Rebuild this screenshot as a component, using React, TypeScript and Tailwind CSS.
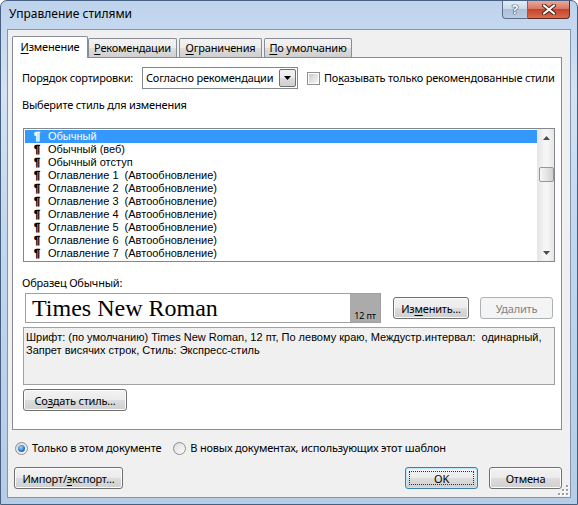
import React from 'react';

const styleNames = [
  'Обычный',
  'Обычный (веб)',
  'Обычный отступ',
  'Оглавление 1  (Автообновление)',
  'Оглавление 2  (Автообновление)',
  'Оглавление 3  (Автообновление)',
  'Оглавление 4  (Автообновление)',
  'Оглавление 5  (Автообновление)',
  'Оглавление 6  (Автообновление)',
  'Оглавление 7  (Автообновление)',
];

const U: React.FC<{ children: React.ReactNode }> = ({ children }) => (
  <span className="underline underline-offset-[2px]">{children}</span>
);

const Button: React.FC<{
  className?: string;
  disabled?: boolean;
  isDefault?: boolean;
  children: React.ReactNode;
}> = ({ className = '', disabled, isDefault, children }) => {
  const look = disabled
    ? 'border-[#adb2b5] bg-[#f4f4f4] text-[#838383]'
    : isDefault
      ? 'border-[#3c7fb1] bg-[linear-gradient(#f2f2f2_0%,#ebebeb_50%,#dddddd_50%,#cfcfcf_100%)] shadow-[inset_0_0_0_1px_#bfe6fb] text-black'
      : 'border-[#707070] bg-[linear-gradient(#f2f2f2_0%,#ebebeb_50%,#dddddd_50%,#cfcfcf_100%)] shadow-[inset_0_0_0_1px_#fcfcfc] text-black';
  return (
    <div
      className={`relative flex h-[22px] items-center justify-center whitespace-nowrap rounded-[3px] border text-[11px] leading-none ${look} ${className}`}
    >
      {isDefault && <span className="absolute inset-[3px] border border-dotted border-[#333]" />}
      {children}
    </div>
  );
};

const Radio: React.FC<{ checked?: boolean }> = ({ checked }) => (
  <div className="flex h-[13px] w-[13px] items-center justify-center rounded-full border border-[#8f8f8f] bg-[linear-gradient(135deg,#d6d6d6,#fbfbfb)]">
    {checked ? (
      <div className="h-[7px] w-[7px] rounded-full bg-[radial-gradient(circle_at_40%_35%,#9fd5ff_0%,#2d7ad6_55%,#0c3e8a_100%)]" />
    ) : (
      <div className="h-[9px] w-[9px] rounded-full bg-[linear-gradient(135deg,#e2e2e2,#f8f8f8)]" />
    )}
  </div>
);

const Tab: React.FC<{ active?: boolean; className?: string; children: React.ReactNode }> = ({
  active,
  className = '',
  children,
}) =>
  active ? (
    <div
      className={`relative z-10 -mb-px flex h-[22px] items-center justify-center rounded-t-[2px] border border-b-0 border-[#898c95] bg-white pb-[1px] ${className}`}
    >
      {children}
    </div>
  ) : (
    <div
      className={`flex h-[19px] items-center justify-center rounded-t-[2px] border border-b-0 border-[#898c95] bg-[linear-gradient(#f3f3f3,#ebebeb_50%,#dedede_50%,#cfcfcf)] ${className}`}
    >
      {children}
    </div>
  );

export default function App() {
  return (
    <div className="relative flex h-[505px] w-[578px] flex-col overflow-hidden rounded-t-[7px] border border-[#475f80] bg-[linear-gradient(180deg,#bed3ec_0%,#d3e3f4_18%,#c3d7ee_45%,#b6cce7_100%)] font-['Noto_Sans',sans-serif] text-[11px] tracking-[-0.2px] text-black">
      {/* title bar */}
      <div className="flex h-[28px] shrink-0 items-start">
        <div className="pl-[8px] pt-[5px] text-[12px] leading-[16px] tracking-normal">Управление стилями</div>
        <div className="ml-auto mr-[7px] flex">
          <div className="flex h-[18px] w-[26px] items-center justify-center rounded-bl-[4px] border border-t-0 border-[#5b6f8c] bg-[linear-gradient(#e3ecf6,#c8d7e9_50%,#aebfd6_50%,#bccde2)]">
            <span className="text-[13px] font-bold leading-none text-white [text-shadow:0_0_1px_#27364c,0_0_1px_#27364c,0_0_1px_#27364c]">
              ?
            </span>
          </div>
          <div className="flex h-[18px] w-[42px] items-center justify-center rounded-br-[4px] border border-l-0 border-t-0 border-[#5b2b24] bg-[linear-gradient(#e9a99b,#d7725d_50%,#c4432a_50%,#d86d4f)]">
            <svg width="14" height="11" viewBox="0 0 14 11">
              <path d="M2 1.5 L12 9.5 M12 1.5 L2 9.5" stroke="#4a1f18" strokeWidth="4" strokeLinecap="round" />
              <path d="M2 1.5 L12 9.5 M12 1.5 L2 9.5" stroke="#ffffff" strokeWidth="2.2" strokeLinecap="round" />
            </svg>
          </div>
        </div>
      </div>

      {/* client area */}
      <div className="relative mx-[6px] mb-[6px] flex flex-1 flex-col border border-[#8396b0] bg-[#f0f0f0] pb-[8px] pl-[4px] pr-[8px] pt-[6px]">
        {/* tabs */}
        <div className="flex h-[21px] items-end whitespace-nowrap text-[11px]">
          <Tab active className="w-[76px]">
            <span>
              <U>И</U>зменение
            </span>
          </Tab>
          <Tab className="w-[89px]">
            <span>
              <U>Р</U>екомендации
            </span>
          </Tab>
          <Tab className="ml-[2px] w-[83px]">
            <span>
              <U>О</U>граничения
            </span>
          </Tab>
          <Tab className="ml-[2px] w-[88px]">
            <span>
              <U>П</U>о умолчанию
            </span>
          </Tab>
        </div>

        {/* panel */}
        <div className="flex flex-col border border-[#898c95] bg-white pb-[18px] pl-[10px] pr-[6px]">
          <div className="mt-[9px] flex h-[22px] items-center whitespace-nowrap">
            <div className="-ml-px w-[120px]">
              Пор<U>я</U>док сортировки:
            </div>
            <div className="flex h-[22px] w-[156px] items-center border border-[#828790] bg-white">
              <div className="flex-1 pl-[3px]">Согласно рекомендации</div>
              <div className="mr-px flex h-[18px] w-[17px] items-center justify-center rounded-[2px] border border-[#707070] bg-[linear-gradient(#f2f2f2,#ebebeb_50%,#dddddd_50%,#cfcfcf)]">
                <svg width="7" height="4" viewBox="0 0 7 4">
                  <path d="M0 0 H7 L3.5 4 Z" fill="#000" />
                </svg>
              </div>
            </div>
            <div className="ml-[9px] flex h-[13px] w-[13px] items-center justify-center border border-[#8f8f8f] bg-white">
              <div className="h-[9px] w-[9px] bg-[linear-gradient(135deg,#cbcbcb,#f6f6f6)]" />
            </div>
            <div className="ml-[4px]">
              По<U>к</U>азывать только рекомендованные стили
            </div>
          </div>

          <div className="-ml-px mt-[8px] h-[16px] leading-[16px]">Выберите стиль для изменения</div>

          {/* style list */}
          <div className="mt-[15px] flex h-[134px] border border-[#828790] bg-white font-['Liberation_Sans',Arial,sans-serif] tracking-normal">
            <div className="flex-1 pl-px pt-px">
              {styleNames.map((name, i) => (
                <div
                  key={name}
                  className={`flex h-[13px] items-center whitespace-pre pl-[9px] text-[11px] leading-[13px] ${
                    i === 0 ? 'bg-[#3399ff] text-white' : 'text-black'
                  }`}
                >
                  <span className="w-[14px] text-[11px] font-bold [-webkit-text-stroke:0.45px_currentColor]">¶</span>
                  {name}
                </div>
              ))}
            </div>
            <div className="flex w-[17px] flex-col items-center border-l border-[#e8e8e8] bg-[linear-gradient(90deg,#e6e6e6,#f5f5f5_40%,#f5f5f5_60%,#e6e6e6)]">
              <div className="flex h-[17px] w-full items-center justify-center">
                <svg width="7" height="4" viewBox="0 0 7 4">
                  <path d="M0 4 H7 L3.5 0 Z" fill="#4d4d4d" />
                </svg>
              </div>
              <div className="mt-[21px] h-[15px] w-[15px] rounded-[2px] border border-[#979797] bg-[linear-gradient(90deg,#f6f6f6,#e4e4e4_50%,#cfcfcf)]" />
              <div className="mt-auto flex h-[17px] w-full items-center justify-center">
                <svg width="7" height="4" viewBox="0 0 7 4">
                  <path d="M0 0 H7 L3.5 4 Z" fill="#4d4d4d" />
                </svg>
              </div>
            </div>
          </div>

          <div className="-ml-px mt-[13px] h-[16px] leading-[16px]">Образец Обычный:</div>

          <div className="mt-[2px] flex h-[30px] items-center">
            <div className="ml-[2px] flex h-[30px] w-[356px] border border-[#a0a0a0] bg-white">
              <div className="flex flex-1 items-center pl-[6px] font-['Liberation_Serif','Times_New_Roman',serif] text-[24px] leading-none tracking-normal">
                Times New Roman
              </div>
              <div className="flex w-[30px] items-end justify-center bg-[#ababab] pb-[2px] text-[9px] leading-none">
                12 пт
              </div>
            </div>
            <Button className="ml-[12px] w-[76px]">
              <span>
                Из<U>м</U>енить...
              </span>
            </Button>
            <Button disabled className="ml-[11px] w-[73px]">
              Удалить
            </Button>
          </div>

          <div className="mt-[4px] h-[58px] border border-[#a0a0a0] bg-[#f0f0f0] pl-[2px] pt-[3px] font-['Liberation_Sans',Arial,sans-serif] text-[11px] leading-[13px] tracking-normal">
            <div className="whitespace-pre">
              Шрифт: (по умолчанию) Times New Roman, 12 пт, По левому краю, Междустр.интервал:  одинарный,
            </div>
            <div>Запрет висячих строк, Стиль: Экспресс-стиль</div>
          </div>

          <Button className="mt-[4px] w-[104px]">
            <span>
              Со<U>з</U>дать стиль...
            </span>
          </Button>
        </div>

        {/* radios */}
        <div className="mt-[10px] flex h-[16px] items-center whitespace-nowrap">
          <div className="ml-[3px]">
            <Radio checked />
          </div>
          <div className="ml-[4px]">Только в этом документе</div>
          <div className="ml-[12px]">
            <Radio />
          </div>
          <div className="ml-[4px]">В новых документах, использующих этот шаблон</div>
        </div>

        {/* bottom buttons */}
        <div className="mt-[11px] flex items-center">
          <Button className="ml-[2px] w-[109px]">
            <span>
              Импорт/<U>э</U>кспорт...
            </span>
          </Button>
          <Button isDefault className="ml-auto w-[73px]">
            OK
          </Button>
          <Button className="ml-[11px] w-[73px]">Отмена</Button>
        </div>

        {/* size grip */}
        <svg className="absolute bottom-[1px] right-[1px]" width="12" height="12" viewBox="0 0 12 12">
          {[
            [10, 2],
            [10, 6],
            [6, 6],
            [10, 10],
            [6, 10],
            [2, 10],
          ].map(([x, y]) => (
            <g key={`${x}-${y}`}>
              <rect x={x} y={y} width="2" height="2" fill="#ffffff" />
              <rect x={x - 1} y={y - 1} width="2" height="2" fill="#a0a0a0" />
            </g>
          ))}
        </svg>
      </div>
    </div>
  );
}
